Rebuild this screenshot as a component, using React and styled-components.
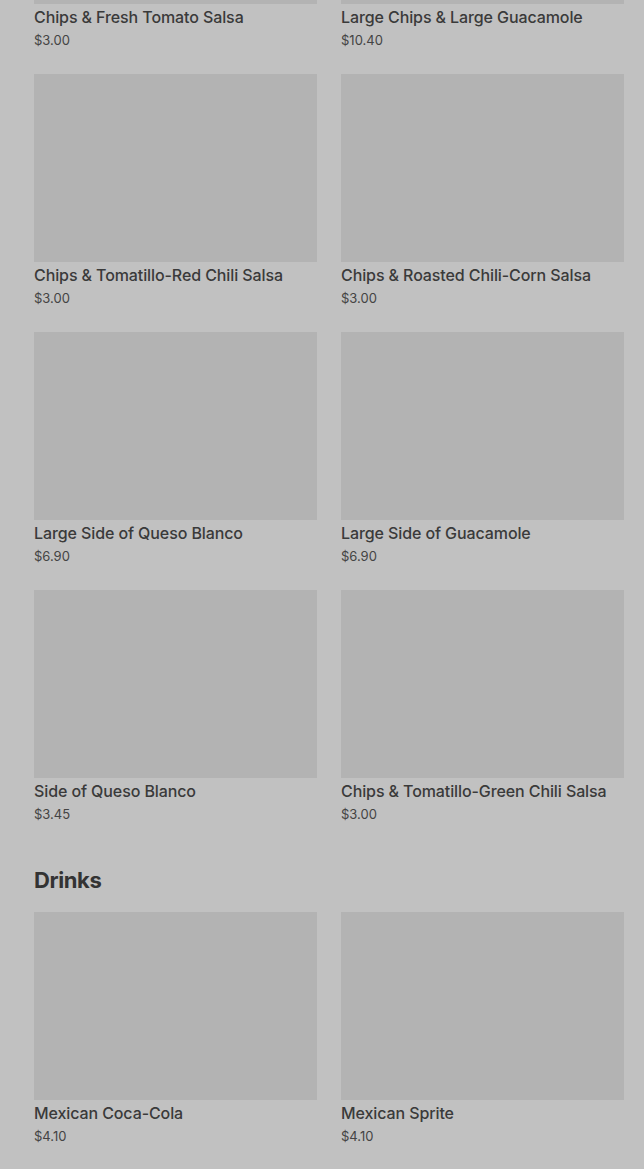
import React from 'react'
import styled, { createGlobalStyle } from 'styled-components'

const GlobalStyle = createGlobalStyle`
  html, body {
    margin: 0;
    padding: 0;
    background: #c1c1c1;
    overflow: hidden;
  }
  body {
    font-family: Inter, "Liberation Sans", sans-serif;
    color: #3a3a3a;
  }
`

const Page = styled.div`
  padding: 0 20px 0 34px;
  margin-top: -184px;
`

const Section = styled.section`
  margin-bottom: 40px;
`

const SectionTitle = styled.h2`
  margin: 0 0 16px;
  font-size: 22px;
  font-weight: 700;
  line-height: 32px;
  letter-spacing: -0.4px;
  color: #333;
`

const Grid = styled.div`
  display: grid;
  grid-template-columns: 1fr 1fr;
  column-gap: 24px;
  row-gap: 24px;
`

const Card = styled.div`
  display: flex;
  flex-direction: column;
`

const Thumb = styled.div`
  height: 188px;
  background: #b3b3b3;
`

const Name = styled.div`
  margin-top: 3px;
  font-size: 16px;
  font-weight: 500;
  line-height: 20px;
  letter-spacing: -0.1px;
  color: #3a3a3a;
`

const Price = styled.div`
  margin-top: 3px;
  font-size: 13px;
  line-height: 20px;
  color: #444;
`

const sides = [
  ['Chips & Fresh Tomato Salsa', '$3.00'],
  ['Large Chips & Large Guacamole', '$10.40'],
  ['Chips & Tomatillo-Red Chili Salsa', '$3.00'],
  ['Chips & Roasted Chili-Corn Salsa', '$3.00'],
  ['Large Side of Queso Blanco', '$6.90'],
  ['Large Side of Guacamole', '$6.90'],
  ['Side of Queso Blanco', '$3.45'],
  ['Chips & Tomatillo-Green Chili Salsa', '$3.00']
]

const drinks = [
  ['Mexican Coca-Cola', '$4.10'],
  ['Mexican Sprite', '$4.10']
]

function Item ({ name, price }) {
  return (
    <Card>
      <Thumb />
      <Name>{name}</Name>
      <Price>{price}</Price>
    </Card>
  )
}

export default function App () {
  return (
    <>
      <GlobalStyle />
      <Page>
        <Section>
          <Grid>
            {sides.map(([name, price]) => (
              <Item key={name} name={name} price={price} />
            ))}
          </Grid>
        </Section>
        <Section>
          <SectionTitle>Drinks</SectionTitle>
          <Grid>
            {drinks.map(([name, price]) => (
              <Item key={name} name={name} price={price} />
            ))}
          </Grid>
        </Section>
      </Page>
    </>
  )
}
